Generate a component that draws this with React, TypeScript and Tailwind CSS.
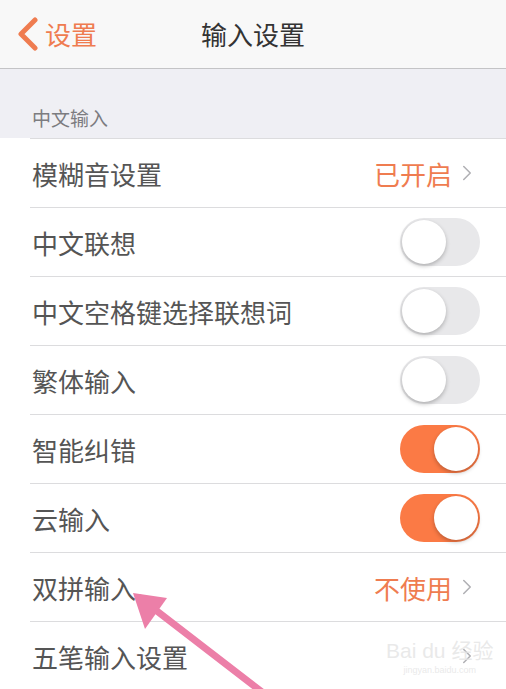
import { ChevronRight } from "lucide-react"

const font = { fontFamily: '"Noto Sans CJK SC", "Noto Sans", sans-serif' }

type Row = {
  label: string
  value?: string
  toggle?: boolean
  on?: boolean
}

const rows: Row[] = [
  { label: "模糊音设置", value: "已开启" },
  { label: "中文联想", toggle: true, on: false },
  { label: "中文空格键选择联想词", toggle: true, on: false },
  { label: "繁体输入", toggle: true, on: false },
  { label: "智能纠错", toggle: true, on: true },
  { label: "云输入", toggle: true, on: true },
  { label: "双拼输入", value: "不使用" },
  { label: "五笔输入设置", value: "" },
]

function Toggle({ on }: { on?: boolean }) {
  return (
    <div
      className={`flex h-[48px] w-[80px] items-center rounded-full p-[2px] ${
        on ? "justify-end bg-[#fb7a45]" : "justify-start bg-[#e8e8ea]"
      }`}
    >
      <div className="h-[44px] w-[44px] rounded-full bg-white shadow-[0_2px_4px_rgba(0,0,0,0.25)]" />
    </div>
  )
}

export default function App() {
  return (
    <div className="relative h-[689px] w-[506px] overflow-hidden bg-white" style={font}>
      <header className="relative flex h-[69px] items-center border-b border-[#c4c4c6] bg-[#f8f8f8]">
        <div className="flex items-center pl-[16px] text-[26px] text-[#ef7c50]">
          <svg width="24" height="34" viewBox="0 0 24 34" className="mr-[5px]">
            <path d="M19 3 L5 17 L19 31" fill="none" stroke="#ef7c50" strokeWidth="5" strokeLinecap="round" strokeLinejoin="round" />
          </svg>
          <span className="leading-none">设置</span>
        </div>
        <div className="pointer-events-none absolute left-0 right-0 text-center text-[26px] leading-none text-[#333]">
          输入设置
        </div>
      </header>

      <div className="flex h-[69px] items-end bg-[#efeff4] pb-[6px] pl-[32px] text-[19px] text-[#7c7c80]">
        中文输入
      </div>

      <div className="bg-white">
        {rows.map((r) => (
          <div key={r.label} className="ml-[30px] flex h-[69px] items-center justify-between border-t border-[#dcdcde] pr-[26px]">
            <span className="pl-[2px] text-[26px] text-[#555]">{r.label}</span>
            {r.toggle ? (
              <Toggle on={r.on} />
            ) : (
              <div className="flex items-center gap-[2px]">
                {r.value && <span className="text-[26px] text-[#ef7c50]">{r.value}</span>}
                <ChevronRight className="h-[26px] w-[26px] text-[#b0b0b4]" strokeWidth={1.4} />
              </div>
            )}
          </div>
        ))}
      </div>

      {/* baidu watermark */}
      <div className="pointer-events-none absolute left-[386px] top-[640px] flex flex-col items-center whitespace-nowrap text-[#e4e4e4]/80">
        <span className="text-[21px] leading-none" style={{ fontFamily: '"Liberation Sans", "Noto Sans CJK SC", sans-serif' }}>
          Bai du 经验
        </span>
        <span className="mt-[5px] text-[9px] leading-none" style={{ fontFamily: '"Liberation Sans", sans-serif' }}>
          jingyan.baidu.com
        </span>
      </div>

      {/* annotation arrow */}
      <svg className="pointer-events-none absolute left-0 top-0" width="506" height="689" viewBox="0 0 506 689">
        <line x1="262" y1="692" x2="140" y2="598" stroke="#ec7fa8" strokeWidth="7" strokeLinecap="round" />
        <polygon points="133,593 167,598 145,629" fill="#ec7fa8" />
      </svg>
    </div>
  )
}
